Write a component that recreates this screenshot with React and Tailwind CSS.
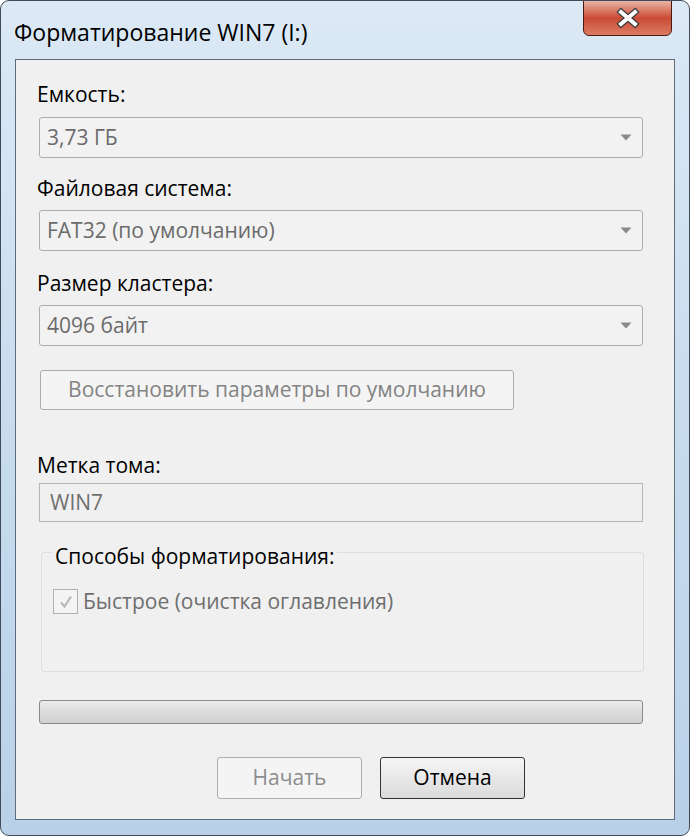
const font = { fontFamily: '"Open Sans", "Noto Sans", "DejaVu Sans", sans-serif' };

function Arrow() {
  return (
    <svg width="12" height="7" viewBox="0 0 12 7" className="shrink-0">
      <path d="M0.5 0.5 L11.5 0.5 L6 6.5 Z" fill="#8a8a8a" />
    </svg>
  );
}

function Select({ value }) {
  return (
    <div className="h-[41px] flex items-center justify-between pl-[7px] pr-[10px] border border-[#acacac] rounded-[3px] bg-[#f2f2f2] text-[#6b6b6b]">
      <span>{value}</span>
      <Arrow />
    </div>
  );
}

function Label({ children, className = '' }) {
  return <div className={`leading-[27px] text-black -ml-[2px] ${className}`}>{children}</div>;
}

export default function App() {
  return (
    <div className="w-[690px] h-[836px] bg-white" style={font}>
      <div className="w-full h-full rounded-[9px] border border-[#3f4b58] bg-gradient-to-b from-[#dce9f5] via-[#c8dcee] to-[#b9d1e8] flex flex-col text-[21px] overflow-hidden">
        {/* title bar */}
        <div className="relative h-[58px] shrink-0 flex items-center pl-[13px] pt-[4px]">
          <span className="text-black text-[23px] leading-none">Форматирование WIN7 (I:)</span>
          <div className="absolute right-[17px] top-[-1px] w-[89px] h-[36px] rounded-b-[6px] border border-[#4a1a12] bg-gradient-to-b from-[#e9b3a5] via-[#c94a33] to-[#dc7a62] flex items-center justify-center">
            <svg width="24" height="20" viewBox="0 0 24 20">
              <path d="M5 4 L19 16 M19 4 L5 16" stroke="#3b3b3b" strokeWidth="6.5" strokeLinecap="square" />
              <path d="M5 4 L19 16 M19 4 L5 16" stroke="#ffffff" strokeWidth="4" strokeLinecap="square" />
            </svg>
          </div>
        </div>
        {/* client area */}
        <div className="flex-1 mx-[14px] mb-[15px] border border-[#5d6b7a] bg-[#f0f0f0] flex flex-col pl-[23px] pr-[31px]">
          <Label className="mt-[21px]">Емкость:</Label>
          <div className="mt-[9px]"><Select value="3,73 ГБ" /></div>

          <Label className="mt-[17px]">Файловая система:</Label>
          <div className="mt-[8px]"><Select value="FAT32 (по умолчанию)" /></div>

          <Label className="mt-[19px]">Размер кластера:</Label>
          <div className="mt-[8px]"><Select value="4096 байт" /></div>

          <div className="mt-[24px] ml-[1px] w-[474px] h-[40px] border border-[#adadad] rounded-[3px] bg-[#f4f4f4] flex items-center justify-center text-[#838383]">
            Восстановить параметры по умолчанию
          </div>

          <Label className="mt-[42px]">Метка тома:</Label>
          <div className="mt-[4px] h-[39px] border border-[#b4b4b4] bg-[#f0f0f0] flex items-center pl-[10px] text-[#707070]">
            WIN7
          </div>

          <div className="relative mt-[30px] ml-[2px] mr-[-1px] h-[120px] border border-[#d9dfe4] rounded-[3px]">
            <div className="absolute left-[10px] top-[-10px] bg-[#f0f0f0] px-[3px] leading-[27px] text-black">
              Способы форматирования:
            </div>
            <div className="absolute left-[11px] top-[35px] flex items-center gap-[5px]">
              <div className="w-[25px] h-[25px] border border-[#b0b0b0] bg-[#f4f4f4] flex items-center justify-center">
                <svg width="16" height="16" viewBox="0 0 16 16">
                  <path d="M3 8.5 L6.5 12.5 L13 2.5" fill="none" stroke="#b8b8b8" strokeWidth="2.2" />
                </svg>
              </div>
              <span className="text-[#6e6e6e] leading-[27px]">Быстрое (очистка оглавления)</span>
            </div>
          </div>

          <div className="mt-[28px] h-[24px] border border-[#8a8a8a] rounded-[3px] bg-gradient-to-b from-[#ececec] via-[#dcdcdc] to-[#d0d0d0]" />

          <div className="mt-[33px] flex gap-[18px] pl-[178px]">
            <div className="w-[145px] h-[42px] border border-[#adadad] rounded-[3px] bg-[#f4f4f4] flex items-center justify-center text-[#8c8c8c]">
              Начать
            </div>
            <div className="w-[145px] h-[42px] border border-[#333] rounded-[3px] bg-gradient-to-b from-[#f6f6f6] to-[#dadada] flex items-center justify-center text-black">
              Отмена
            </div>
          </div>
        </div>
      </div>
    </div>
  );
}
